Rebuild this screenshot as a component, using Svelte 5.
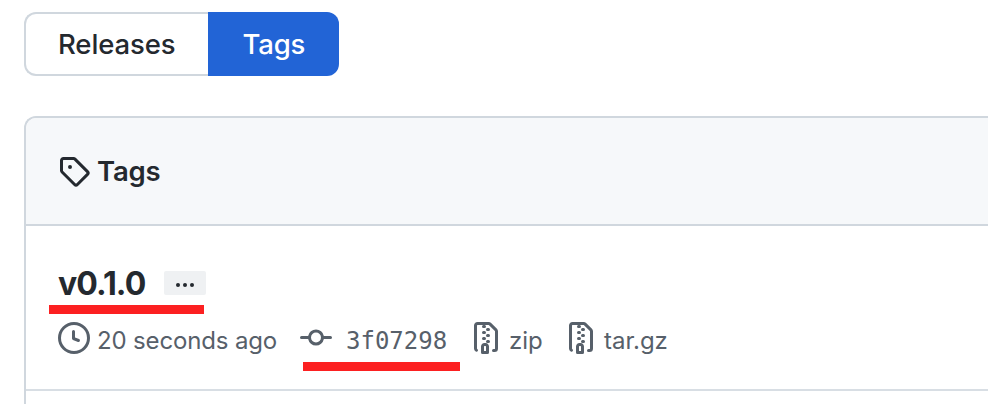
<script>
  const archives = ['zip', 'tar.gz'];
</script>

{#snippet icon(d)}
  <svg class="icon" viewBox="0 0 16 16" width="32" height="32" fill="currentColor" aria-hidden="true"><path {d} /></svg>
{/snippet}

<main>
  <nav>
    <a class="tab releases" href="#releases"><span>Releases</span></a>
    <a class="tab tags" href="#tags"><span>Tags</span></a>
  </nav>

  <section>
    <header>
      {@render icon('M1 7.775V2.75C1 1.784 1.784 1 2.75 1h5.025c.464 0 .91.184 1.238.513l6.25 6.25a1.75 1.75 0 0 1 0 2.474l-5.026 5.026a1.75 1.75 0 0 1-2.474 0l-6.25-6.25A1.752 1.752 0 0 1 1 7.775Zm1.5 0c0 .066.026.13.073.177l6.25 6.25a.25.25 0 0 0 .354 0l5.025-5.025a.25.25 0 0 0 0-.354l-6.25-6.25a.25.25 0 0 0-.177-.073H2.75a.25.25 0 0 0-.25.25ZM6 5a1 1 0 1 1 0 2 1 1 0 0 1 0-2Z')}
      <h2>Tags</h2>
    </header>
    <article>
      <div class="title">
        <h3>v0.1.0</h3>
        <button aria-label="Toggle message"><i></i><i></i><i></i></button>
        <div class="mark first"></div>
      </div>
      <div class="meta">
        <span class="item time">
          {@render icon('M8 0a8 8 0 1 1 0 16A8 8 0 0 1 8 0ZM1.5 8a6.5 6.5 0 1 0 13 0 6.5 6.5 0 0 0-13 0Zm7-3.25v2.992l2.028.812a.75.75 0 0 1-.557 1.392l-2.5-1A.751.751 0 0 1 7 8.25v-3.5a.75.75 0 0 1 1.5 0Z')}
          <span class="label">20 seconds ago</span>
        </span>
        <span class="item commit">
          {@render icon('M11.93 8.5a4.002 4.002 0 0 1-7.86 0H.75a.75.75 0 0 1 0-1.5h3.32a4.002 4.002 0 0 1 7.86 0h3.32a.75.75 0 0 1 0 1.5Zm-1.43-.75a2.5 2.5 0 1 0-5 0 2.5 2.5 0 0 0 5 0Z')}
          <code>3f07298</code>
        </span>
        {#each archives as name}
          <span class="item archive">
            {@render icon('M3.5 1.75v11.5c0 .09.048.173.126.217a.75.75 0 0 1-.752 1.298A1.748 1.748 0 0 1 2 13.25V1.75C2 .784 2.784 0 3.75 0h5.586c.464 0 .909.185 1.237.513l2.914 2.914c.329.328.513.773.513 1.237v8.586A1.75 1.75 0 0 1 12.25 15h-.5a.75.75 0 0 1 0-1.5h.5a.25.25 0 0 0 .25-.25V4.664a.25.25 0 0 0-.073-.177L9.513 1.573a.25.25 0 0 0-.177-.073H7.25a.75.75 0 0 1 0 1.5h-.5a.75.75 0 0 1 0-1.5h-3a.25.25 0 0 0-.25.25Zm3.75 8.75h.5c.966 0 1.75.784 1.75 1.75v3a.75.75 0 0 1-.75.75h-2.5a.75.75 0 0 1-.75-.75v-3c0-.966.784-1.75 1.75-1.75ZM6 5.25a.75.75 0 0 1 .75-.75h.5a.75.75 0 0 1 0 1.5h-.5A.75.75 0 0 1 6 5.25Zm.75 2.25h.5a.75.75 0 0 1 0 1.5h-.5a.75.75 0 0 1 0-1.5ZM8 6.75A.75.75 0 0 1 8.75 6h.5a.75.75 0 0 1 0 1.5h-.5A.75.75 0 0 1 8 6.75ZM8.75 3h.5a.75.75 0 0 1 0 1.5h-.5a.75.75 0 0 1 0-1.5ZM8 9.75A.75.75 0 0 1 8.75 9h.5a.75.75 0 0 1 0 1.5h-.5A.75.75 0 0 1 8 9.75Zm-1 2.5v2.25h1v-2.25a.25.25 0 0 0-.25-.25h-.5a.25.25 0 0 0-.25.25Z')}
            <span class="label">{name}</span>
          </span>
        {/each}
        <div class="mark second"></div>
      </div>
    </article>
  </section>
</main>

<style>
  :global(body) { margin: 0; background: #fff; }
  main {
    box-sizing: border-box;
    height: 404px;
    padding: 12px 0 0 24px;
    overflow: hidden;
    font-family: Inter, 'Liberation Sans', sans-serif;
    color: #24292f;
  }
  nav { display: flex; height: 64px; }
  .tab {
    box-sizing: border-box;
    display: flex;
    align-items: center;
    font-size: 27.5px;
    font-weight: 500;
    line-height: 40px;
    color: inherit;
    text-decoration: none;
    white-space: nowrap;
  }
  .releases {
    width: 184px;
    padding-left: 32px;
    border: 2px solid #d0d7de;
    border-right: 0;
    border-radius: 12px 0 0 12px;
    letter-spacing: -0.1px;
  }
  .tags {
    width: 131px;
    padding-left: 34.5px;
    border-radius: 0 12px 12px 0;
    background: #2264d6;
    color: #fff;
    letter-spacing: -0.2px;
  }
  section {
    box-sizing: border-box;
    margin-top: 40px;
    height: 300px;
    border: 2px solid #d0d7de;
    border-width: 2px 0 0 2px;
    border-radius: 12px 0 0 0;
    overflow: hidden;
  }
  header {
    display: flex;
    align-items: center;
    gap: 7px;
    height: 106px;
    padding-left: 32px;
    background: #f6f8fa;
    border-bottom: 2px solid #d0d7de;
  }
  h2, h3 { margin: 0; white-space: nowrap; }
  h2 { padding-bottom: 1px; font-size: 27.5px; font-weight: 600; line-height: 40px; letter-spacing: -0.25px; }
  .icon { display: block; flex: none; }
  article {
    box-sizing: border-box;
    height: 165px;
    padding: 33px 0 0 32px;
    border-bottom: 2px solid #d8dee4;
  }
  .title { position: relative; display: flex; align-items: center; height: 48px; }
  h3 { width: 106px; padding-top: 2px; font-size: 32px; font-weight: 700; line-height: 48px; letter-spacing: -0.9px; }
  button {
    display: flex;
    align-items: center;
    justify-content: center;
    gap: 3px;
    width: 42px;
    height: 24px;
    padding: 4px 0 0;
    border: 0;
    border-radius: 2px;
    background: #eff1f3;
    color: #24292f;
  }
  i { width: 4px; height: 4px; border-radius: 50%; background: currentColor; }
  .meta {
    position: relative;
    display: flex;
    align-items: center;
    height: 32px;
    margin-top: 15px;
    color: #57606a;
    font-size: 24px;
    line-height: 32px;
    white-space: nowrap;
  }
  .item { display: flex; align-items: center; gap: 7px; }
  .time { width: 242px; letter-spacing: -0.15px; }
  .commit { width: 170px; gap: 14px; }
  .archive { width: 95px; }
  .label { padding-top: 6px; }
  code { padding-top: 6px; font: 24px/32px 'DejaVu Sans Mono', monospace; }
  .mark { position: absolute; height: 9px; background: #fc2021; }
  .first { left: -9.5px; top: 45.5px; width: 155.5px; }
  .second { left: 245.3px; top: 39.5px; width: 157px; }
</style>
